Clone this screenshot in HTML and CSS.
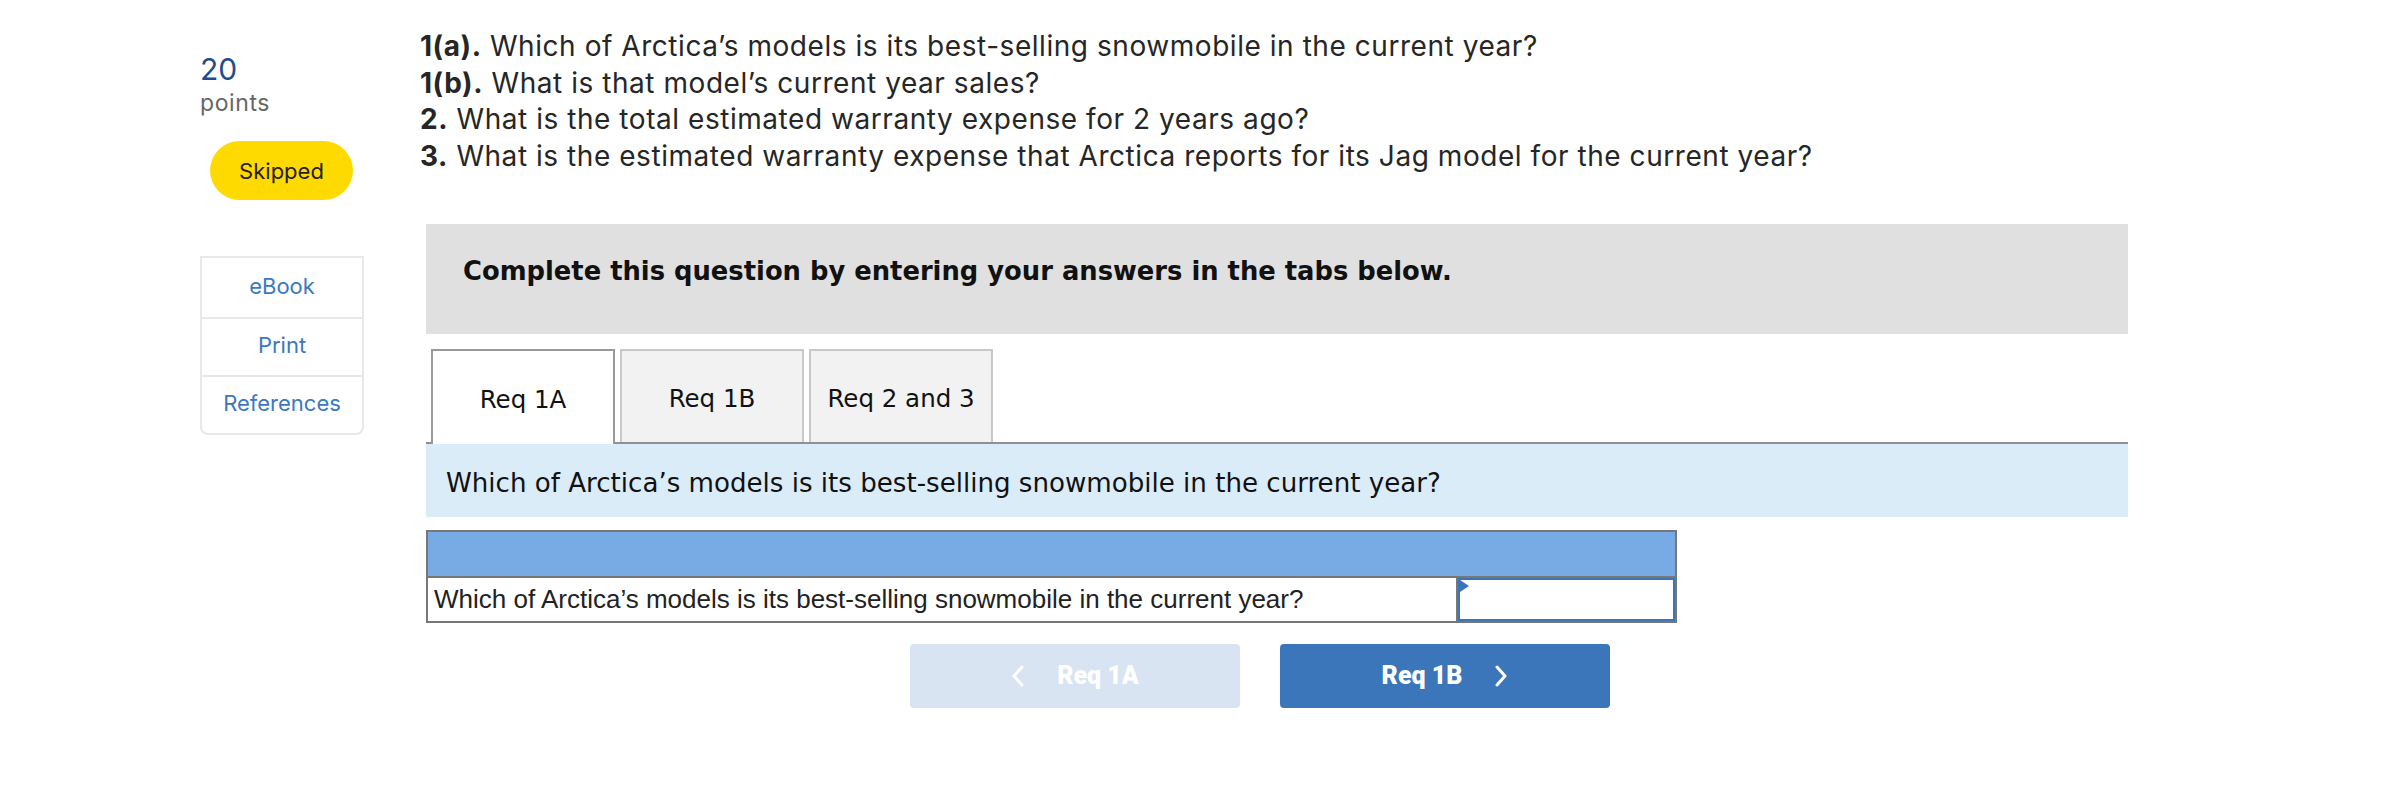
FILE: index.html
```html
<!DOCTYPE html>
<html lang="en">
<head>
<meta charset="utf-8">
<title>Question</title>
<link rel="stylesheet" href="styles.css">
</head>
<body>
<div class="page">
  <aside class="side">
    <div class="score">20</div>
    <div class="points">points</div>
    <div class="pill">Skipped</div>
    <nav class="sidebox">
      <a class="side-link">eBook</a>
      <a class="side-link">Print</a>
      <a class="side-link">References</a>
    </nav>
  </aside>
  <main class="main">
    <div class="question">
      <p class="q-line"><b>1(a).</b> Which of Arctica’s models is its best-selling snowmobile in the current year?</p>
      <p class="q-line"><b>1(b).</b> What is that model’s current year sales?</p>
      <p class="q-line"><b>2.</b> What is the total estimated warranty expense for 2 years ago?</p>
      <p class="q-line"><b>3.</b> What is the estimated warranty expense that Arctica reports for its Jag model for the current year?</p>
    </div>
    <div class="widget">
      <div class="instructions">Complete this question by entering your answers in the tabs below.</div>
      <div class="tabs">
        <div class="tab active">Req 1A</div>
        <div class="tab">Req 1B</div>
        <div class="tab">Req 2 and 3</div>
      </div>
      <div class="prompt">Which of Arctica’s models is its best-selling snowmobile in the current year?</div>
      <div class="grid">
        <div class="grid-head"></div>
        <div class="grid-row">
          <div class="grid-label">Which of Arctica’s models is its best-selling snowmobile in the current year?</div>
          <div class="grid-input"><span class="marker"></span></div>
        </div>
      </div>
      <div class="nav">
        <div class="btn btn-prev">
          <svg class="chev" width="14" height="22" viewBox="0 0 14 22"><polyline points="11,2 3,11 11,20" fill="none" stroke="#ffffff" stroke-width="3" stroke-linecap="round" stroke-linejoin="round"/></svg>
          <span>Req 1A</span>
        </div>
        <div class="btn btn-next">
          <span>Req 1B</span>
          <svg class="chev" width="14" height="22" viewBox="0 0 14 22"><polyline points="3,2 11,11 3,20" fill="none" stroke="#ffffff" stroke-width="3" stroke-linecap="round" stroke-linejoin="round"/></svg>
        </div>
      </div>
    </div>
  </main>
</div>
</body>
</html>
```

FILE: styles.css
```css
* { box-sizing: border-box; }
body {
  margin: 0;
  background: #ffffff;
  font-family: Inter, Lato, sans-serif;
  color: #222222;
}
.page {
  display: flex;
  padding-left: 200px;
}
.side {
  width: 164px;
  flex: none;
  display: flex;
  flex-direction: column;
}
.score {
  margin-top: 54px;
  font-size: 30px;
  line-height: 30px;
  color: #1f4c8c;
}
.points {
  margin-top: 8px;
  font-size: 23px;
  line-height: 22px;
  letter-spacing: 0.6px;
  color: #666666;
}
.pill {
  margin-top: 27px;
  margin-left: 10px;
  width: 143px;
  height: 59px;
  border-radius: 30px;
  background: #ffda00;
  display: flex;
  align-items: center;
  justify-content: center;
  font-size: 22px;
  color: #222222;
}
.sidebox {
  margin-top: 56px;
  width: 164px;
  border: 2px solid #e8e8e8;
  border-radius: 0 0 8px 8px;
  display: flex;
  flex-direction: column;
}
.side-link {
  height: 58px;
  display: flex;
  align-items: center;
  justify-content: center;
  padding-bottom: 4px;
  font-size: 22px;
  color: #3b78c0;
  border-top: 2px solid #e8e8e8;
}
.side-link:first-child {
  border-top: none;
  height: 59px;
}
.main {
  margin-left: 56px;
  width: 1708px;
  padding-top: 28px;
}
.q-line {
  margin: 0;
  font-size: 28px;
  line-height: 36.7px;
  letter-spacing: 0.55px;
  color: #262626;
  white-space: nowrap;
}
.q-line b { font-weight: 700; }
.widget {
  margin-left: 6px;
  width: 1702px;
  margin-top: 49px;
  font-family: "DejaVu Sans", Verdana, sans-serif;
}
.instructions {
  height: 110px;
  background: #e0e0e0;
  padding: 32px 0 0 37px;
  font-size: 25.8px;
  font-weight: 700;
  color: #111111;
}
.tabs {
  margin-top: 15px;
  display: flex;
  gap: 5px;
  padding-left: 5px;
  border-bottom: 2px solid #909090;
  height: 95px;
  align-items: flex-start;
}
.tab {
  width: 184px;
  height: 93px;
  background: #f2f2f2;
  border: 2px solid #c8c8c8;
  border-bottom: none;
  display: flex;
  align-items: center;
  justify-content: center;
  padding-top: 4px;
  font-size: 24.5px;
  color: #111111;
}
.tab.active {
  background: #ffffff;
  border-color: #999999;
  height: 95px;
  margin-bottom: -2px;
  position: relative;
}
.prompt {
  height: 73px;
  background: #dbecf9;
  display: flex;
  align-items: center;
  padding: 5px 0 0 20px;
  font-size: 26.1px;
  color: #111111;
}
.grid {
  margin-top: 13px;
  width: 1251px;
  border: 2px solid #777777;
}
.grid-head {
  height: 46px;
  background: #78abe3;
  border-bottom: 2px solid #777777;
}
.grid-row {
  display: flex;
  height: 43px;
}
.grid-label {
  width: 1030px;
  border-right: 2px solid #777777;
  display: flex;
  align-items: center;
  padding-left: 6px;
  font-family: "Liberation Sans", Arial, sans-serif;
  font-size: 26px;
  color: #222222;
  white-space: nowrap;
}
.grid-input {
  flex: 1;
  border: 2px solid #3b74b9;
  position: relative;
  background: #ffffff;
}
.marker {
  position: absolute;
  left: 0;
  top: 0;
  width: 0;
  height: 0;
  border-top: 6px solid transparent;
  border-bottom: 6px solid transparent;
  border-left: 9px solid #3b74b9;
}
.nav {
  margin-top: 21px;
  margin-left: 484px;
  display: flex;
  gap: 40px;
}
.btn {
  width: 330px;
  height: 64px;
  border-radius: 4px;
  display: flex;
  align-items: center;
  justify-content: center;
  gap: 32px;
  font-family: Roboto, "Open Sans", sans-serif;
  font-weight: 900;
  font-size: 25px;
  color: #ffffff;
}
.btn-prev { background: #d8e4f2; }
.btn-next { background: #3a76b9; }
.chev { display: block; }
```
